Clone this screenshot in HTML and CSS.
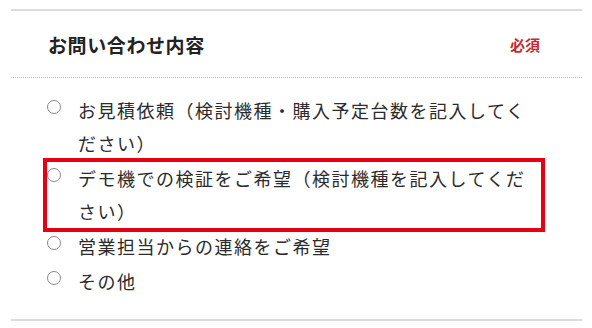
FILE: index.html
```html
<!DOCTYPE html>
<html>
<head>
    <meta charset="utf-8">
    <title>お問い合わせ内容</title>
    <link rel="stylesheet" href="styles.css">
</head>
<body>
    <div class="form-block">
        <div class="form-head">
            <h2 class="form-title">お問い合わせ内容</h2>
            <span class="required">必須</span>
        </div>
        <div class="options">
            <label class="option">
                <input type="radio" name="inquiry" value="estimate">
                <span class="option-text">お見積依頼（検討機種・購入予定台数を記入してください）</span>
            </label>
            <label class="option highlight">
                <input type="radio" name="inquiry" value="demo">
                <span class="option-text">デモ機での検証をご希望（検討機種を記入してください）</span>
            </label>
            <label class="option">
                <input type="radio" name="inquiry" value="contact">
                <span class="option-text">営業担当からの連絡をご希望</span>
            </label>
            <label class="option">
                <input type="radio" name="inquiry" value="other">
                <span class="option-text">その他</span>
            </label>
        </div>
    </div>
</body>
</html>
```

FILE: styles.css
```css
body {
    margin: 0;
    background-color: #fff;
    font-family: "Noto Sans CJK JP", "Noto Sans", sans-serif;
}
.form-block {
    margin: 9px 10px 0 11px;
    border-top: 2px solid #dcdcdc;
    border-bottom: 2px solid #dcdcdc;
}
.form-head {
    display: flex;
    justify-content: space-between;
    align-items: center;
    height: 66px;
    padding: 0 42px 0 37px;
    border-bottom: 1px dotted #bbb;
}
.form-title {
    margin: 0;
    font-size: 19px;
    font-weight: bold;
    letter-spacing: 0.6px;
    color: #222;
}
.required {
    font-size: 15px;
    font-weight: bold;
    color: #c8282d;
}
.options {
    display: flex;
    flex-direction: column;
    gap: 2px;
    padding: 16px 41px 21px 36px;
}
.option {
    display: flex;
    align-items: flex-start;
    cursor: pointer;
}
.option input[type="radio"] {
    appearance: none;
    -webkit-appearance: none;
    flex: none;
    width: 14px;
    height: 14px;
    margin: 6px 17px 0 0;
    border: 1px solid #8a8a8a;
    border-radius: 50%;
    background-color: #fff;
    box-sizing: border-box;
}
.option-text {
    flex: 1;
    padding-right: 8px;
    font-size: 18px;
    line-height: 33px;
    letter-spacing: 1.5px;
    color: #2b2b2b;
}
.highlight {
    outline: 4px solid #e60012;
    outline-offset: 0;
}
```
